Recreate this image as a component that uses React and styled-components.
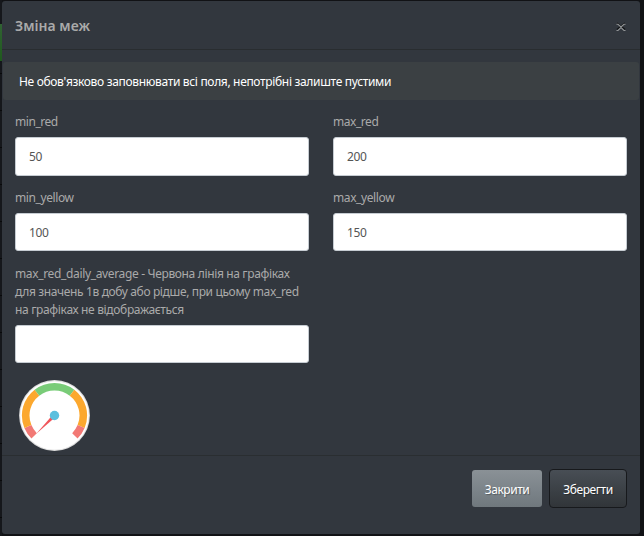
import React from "react";
import styled, { createGlobalStyle } from "styled-components";

const GlobalStyle = createGlobalStyle`
  * { box-sizing: border-box; }
  body {
    margin: 0;
    background: #111215;
    font-family: "Noto Sans", "Open Sans", sans-serif;
    font-size: 12px;
    line-height: 18px;
    color: #aaa;
  }
`;

const Screen = styled.div`
  position: relative;
  display: flex;
  width: 644px;
  height: 536px;
  padding: 1px 4px 2px 2px;
  overflow: hidden;
  background: #111215;
`;

const Backdrop = styled.div`
  position: absolute;
  left: 0;
  top: 0;
  width: 2px;
  height: 536px;
  background: repeating-linear-gradient(#15171b 0 36px, #08090a 36px 37px);
`;

const BackdropStatus = styled.div`
  position: absolute;
  left: 0;
  top: 24px;
  width: 2px;
  height: 37px;
  background: linear-gradient(#316333, #1f5a1d);
`;

const Modal = styled.section`
  position: relative;
  display: flex;
  flex-direction: column;
  width: 638px;
  height: 533px;
  border-radius: 3px;
  background: #32373e;
`;

const Header = styled.header`
  display: flex;
  align-items: center;
  justify-content: space-between;
  height: 49px;
  padding: 0 13px;
  border-bottom: 1px solid #292d30;
`;

const Title = styled.h4`
  margin: 0;
  padding-top: 2px;
  font-size: 14px;
  font-weight: 600;
  line-height: 20px;
`;

const CloseButton = styled.button`
  display: flex;
  margin-top: 3px;
  padding: 0;
  border: 0;
  background: none;
`;

const Body = styled.div`
  height: 406px;
  padding: 12px 1px 0;
  border-bottom: 1px solid #2a2e31;
`;

const Notice = styled.div`
  height: 38px;
  padding: 11px 16px 0;
  border-radius: 3px;
  background: #3b4043;
  color: #fff;
`;

const Text = styled.span`
  display: inline-block;
  white-space: nowrap;
  letter-spacing: ${(p) => p.$tracking || 0}px;
`;

const Fields = styled.div`
  display: grid;
  grid-template-columns: 294px 294px;
  column-gap: 24px;
  row-gap: 14px;
  padding: 13px 12px 0;
`;

const Field = styled.label`
  display: block;
`;

const Caption = styled.span`
  display: flex;
  flex-direction: column;
  align-items: flex-start;
  margin-bottom: 6px;
`;

const Input = styled.input`
  display: block;
  width: 100%;
  height: ${(p) => (p.$tall ? 39 : 38)}px;
  margin: 0 0 ${(p) => (p.$tall ? -1 : 0)}px;
  padding: 0 13px;
  border: 1px solid #c6ccd2;
  border-radius: 3px;
  outline: 0;
  background: #fff;
  color: #555;
  font: inherit;
  letter-spacing: -0.4px;
`;

const GaugeBox = styled.div`
  padding: 17px 0 0 16px;
  line-height: 0;
`;

const Footer = styled.footer`
  display: flex;
  justify-content: flex-end;
  align-items: center;
  gap: 7px;
  height: 66px;
  padding: 0 13px 2px 0;
`;

const Button = styled.button`
  width: ${(p) => (p.$primary ? 78 : 70)}px;
  height: ${(p) => (p.$primary ? 39 : 37)}px;
  padding: 4px 0 0;
  border: ${(p) => (p.$primary ? "1px solid #17191c" : "0")};
  border-radius: ${(p) => (p.$primary ? 4 : 3)}px;
  background: ${(p) =>
    p.$primary
      ? "linear-gradient(#484e55, #3a3f44 60%, #313539)"
      : "linear-gradient(#8a9196, #7a8288 60%, #70787d)"};
  color: #fff;
  font: inherit;
  text-shadow: 1px 1px 1px rgba(0, 0, 0, 0.3);
`;

const C = 35.5;

function point(radius, degrees) {
  const a = (degrees * Math.PI) / 180;
  return `${(C + radius * Math.sin(a)).toFixed(2)} ${(C - radius * Math.cos(a)).toFixed(2)}`;
}

function band(from, to) {
  return `M${point(32.6, from)}A32.6 32.6 0 0 1 ${point(32.6, to)}L${point(25, to)}A25 25 0 0 0 ${point(25, from)}Z`;
}

function Gauge() {
  return (
    <svg width="71" height="71" viewBox="0 0 71 71">
      <circle cx={C} cy={C} r="35.4" fill="#ddd" />
      <circle cx={C} cy={C} r="34.3" fill="#fff" />
      <path d={band(-135, -112.5)} fill="#f27975" />
      <path d={band(-112.5, -37.5)} fill="#fca82e" />
      <path d={band(-37.5, 37.5)} fill="#79cc78" />
      <path d={band(37.5, 112.5)} fill="#fca82e" />
      <path d={band(112.5, 135)} fill="#f27975" />
      <path d={`M${point(25.8, -135)}L${point(1.8, -45)}L${point(1.8, 135)}Z`} fill="#f0555a" />
      <circle cx={C} cy={C} r="4.7" fill="#5bbfde" />
    </svg>
  );
}

const fields = [
  { lines: [["min_red", -0.45]], value: "50", tall: true },
  { lines: [["max_red", -0.45]], value: "200", tall: true },
  { lines: [["min_yellow", -0.4]], value: "100" },
  { lines: [["max_yellow", -0.4]], value: "150" },
  {
    lines: [
      ["max_red_daily_average - Червона лінія на графіках", -0.35],
      ["для значень 1в добу або рідше, при цьому max_red", -0.36],
      ["на графіках не відображається", -0.34],
    ],
    value: "",
  },
];

export default function App() {
  return (
    <Screen>
      <GlobalStyle />
      <Backdrop />
      <BackdropStatus />
      <Modal>
        <Header>
          <Title>Зміна меж</Title>
          <CloseButton aria-label="Закрити">
            <svg width="12" height="10" viewBox="0 0 12 10" fill="none">
              <path d="M2 1 10 7.5M10 1 2 7.5" stroke="#131517" strokeWidth="1.6" />
              <path d="M1.5 2.3H3L6 5 9 2.3H10.5M1.5 8.5H3L6 5.6 9 8.5H10.5" stroke="#929597" strokeWidth="1.1" />
            </svg>
          </CloseButton>
        </Header>
        <Body>
          <Notice>
            <Text $tracking={-0.33}>Не обов'язково заповнювати всі поля, непотрібні залиште пустими</Text>
          </Notice>
          <Fields>
            {fields.map((f) => (
              <Field key={f.lines[0][0]}>
                <Caption>
                  {f.lines.map(([text, tracking]) => (
                    <Text key={text} $tracking={tracking}>{text}</Text>
                  ))}
                </Caption>
                <Input defaultValue={f.value} $tall={f.tall} />
              </Field>
            ))}
          </Fields>
          <GaugeBox>
            <Gauge />
          </GaugeBox>
        </Body>
        <Footer>
          <Button><Text $tracking={-0.45}>Закрити</Text></Button>
          <Button $primary><Text $tracking={-0.45}>Зберегти</Text></Button>
        </Footer>
      </Modal>
    </Screen>
  );
}
